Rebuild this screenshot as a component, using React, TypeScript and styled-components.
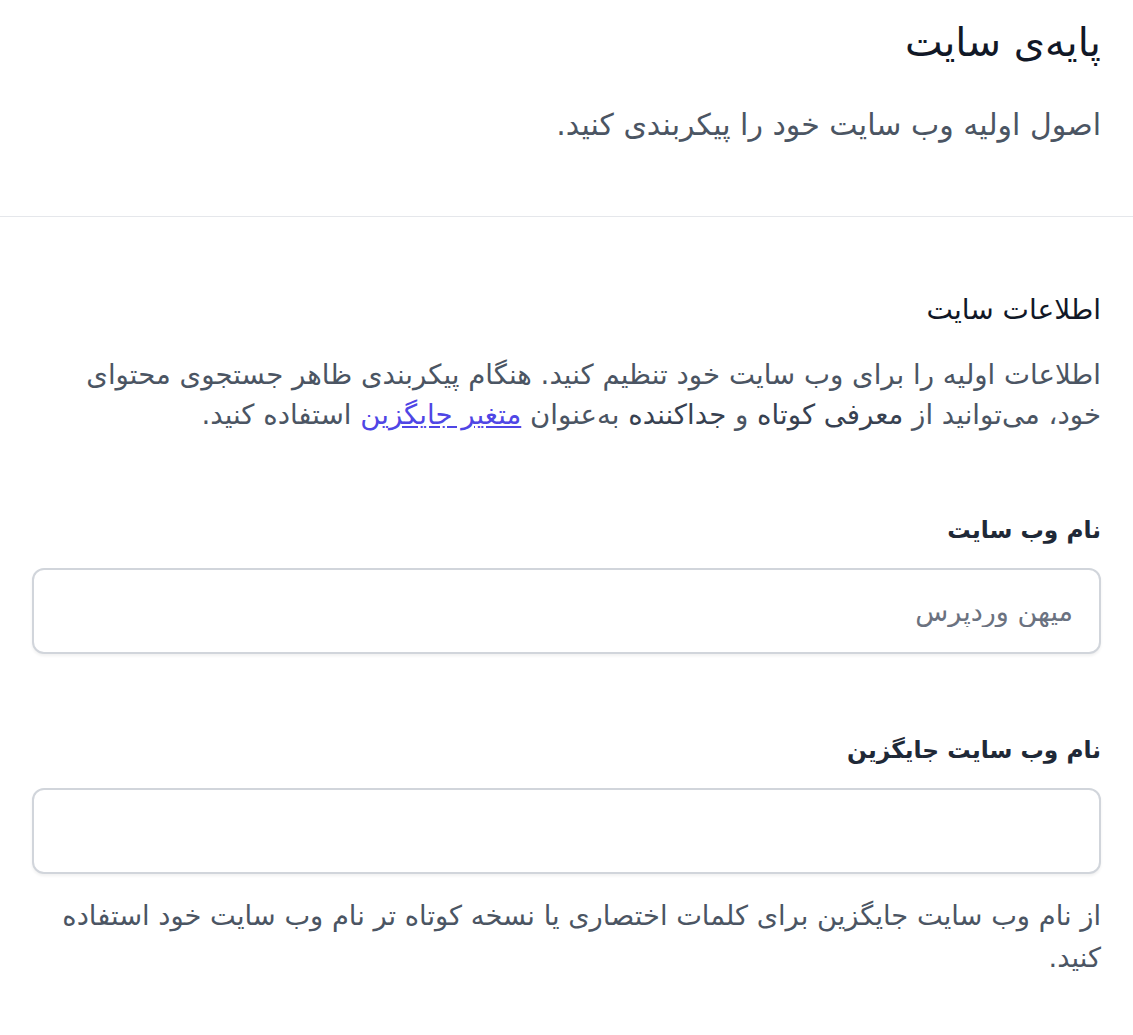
import styled, { createGlobalStyle } from "styled-components";

const GlobalStyle = createGlobalStyle`
  body {
    margin: 0;
    background: #ffffff;
    font-family: "DejaVu Sans", "Noto Sans Arabic", sans-serif;
    color: #111827;
  }
`;

const Page = styled.div`
  direction: rtl;
  text-align: right;
`;

const Header = styled.header`
  padding: 14px 32px 71px;
  border-bottom: 1px solid #e5e7eb;
`;

const Title = styled.h1`
  margin: 0;
  font-size: 40px;
  font-weight: 400;
  line-height: 57px;
  color: #111827;
`;

const Subtitle = styled.p`
  margin: 34px 0 0;
  font-size: 30px;
  line-height: 40px;
  color: #4b5563;
`;

const Body = styled.main`
  padding: 73px 32px 40px;
`;

const SectionTitle = styled.h2`
  margin: 0;
  font-size: 28px;
  font-weight: 400;
  line-height: 40px;
  color: #111827;
`;

const Description = styled.p`
  margin: 25px 0 0;
  font-size: 27.6px;
  line-height: 40px;
  color: #4b5563;

  em {
    font-style: normal;
    color: #374151;
  }

  a {
    color: #4f46e5;
    text-decoration: underline;
  }
`;

const Field = styled.div<{ $gap: number }>`
  margin-top: ${(p) => p.$gap}px;
  display: flex;
  flex-direction: column;
`;

const Label = styled.label`
  font-size: 23.3px;
  font-weight: 700;
  line-height: 36px;
  color: #1f2937;
`;

const Input = styled.input`
  margin-top: 20px;
  height: 86px;
  box-sizing: border-box;
  padding: 0 26px;
  border: 2px solid #d1d5db;
  border-radius: 12px;
  box-shadow: 0 2px 3px rgba(0, 0, 0, 0.06);
  background: #ffffff;
  font-family: inherit;
  font-size: 27px;
  color: #111827;
  direction: rtl;
  outline: none;

  &::placeholder {
    color: #6b7280;
  }
`;

const Help = styled.p`
  margin: 21px 0 0;
  font-size: 27.3px;
  line-height: 42px;
  color: #4b5563;
`;

export default function App() {
  return (
    <Page>
      <GlobalStyle />
      <Header>
        <Title>پایه‌ی سایت</Title>
        <Subtitle>اصول اولیه وب سایت خود را پیکربندی کنید.</Subtitle>
      </Header>
      <Body>
        <SectionTitle>اطلاعات سایت</SectionTitle>
        <Description>
          اطلاعات اولیه را برای وب سایت خود تنظیم کنید. هنگام پیکربندی ظاهر
          جستجوی محتوای خود، می‌توانید از <em>معرفی کوتاه</em> و{" "}
          <em>جداکننده</em> به‌عنوان <a href="#">متغیر جایگزین</a> استفاده
          کنید.
        </Description>
        <Field $gap={77}>
          <Label>نام وب سایت</Label>
          <Input placeholder="میهن وردپرس" />
        </Field>
        <Field $gap={78}>
          <Label>نام وب سایت جایگزین</Label>
          <Input />
          <Help>
            از نام وب سایت جایگزین برای کلمات اختصاری یا نسخه کوتاه تر نام وب
            سایت خود استفاده کنید.
          </Help>
        </Field>
      </Body>
    </Page>
  );
}
